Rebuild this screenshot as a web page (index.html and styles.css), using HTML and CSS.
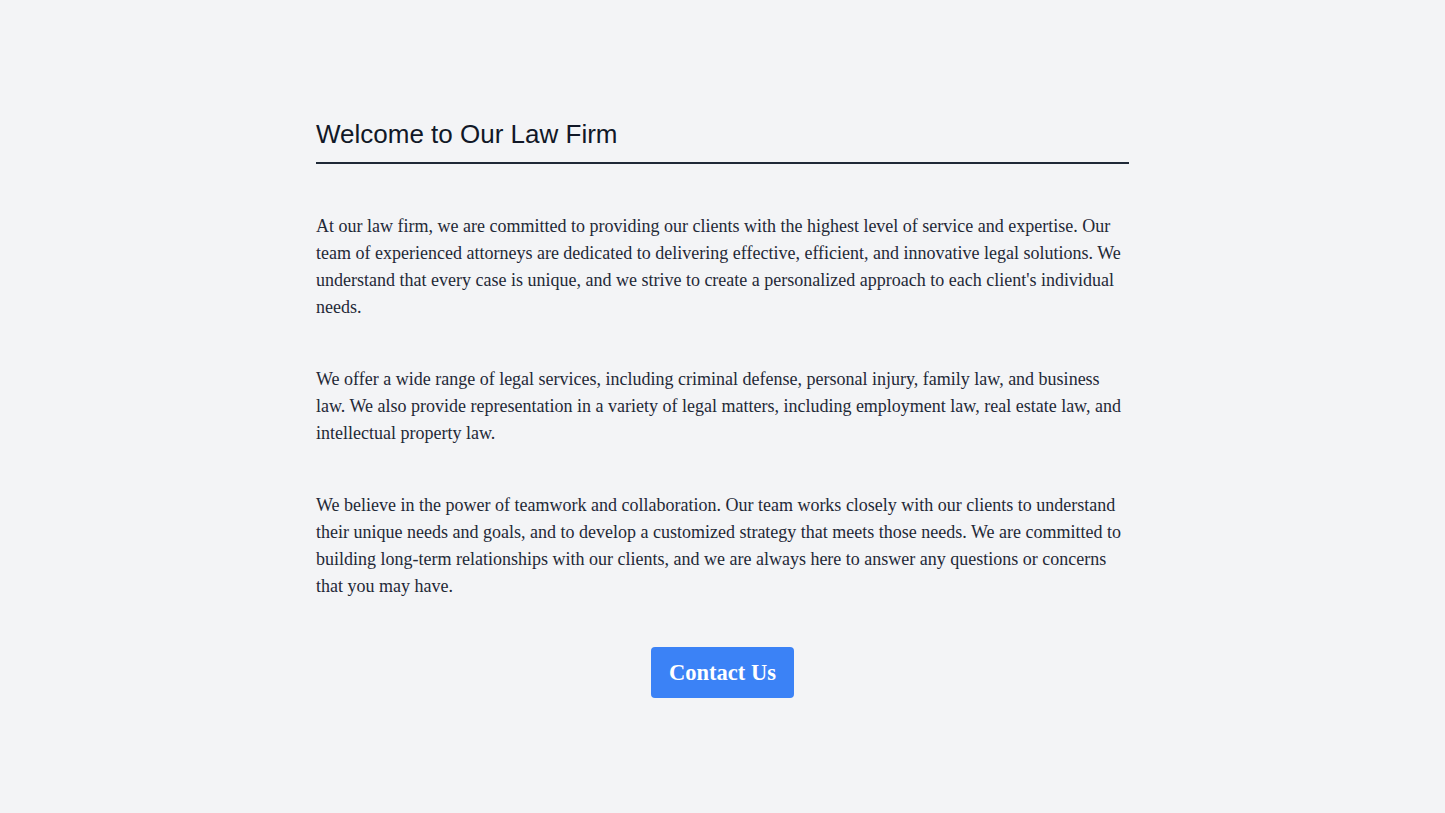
FILE: index.html
```html
<!DOCTYPE html>
<html lang="en">
<head>
<meta charset="utf-8">
<title>Law Firm</title>
<link rel="stylesheet" href="styles.css">
</head>
<body>
<main class="page">
  <header class="intro">
    <h1 class="title">Welcome to Our Law Firm</h1>
  </header>
  <section class="content">
    <p class="text">At our law firm, we are committed to providing our clients with the highest level of service and expertise. Our team of experienced attorneys are dedicated to delivering effective, efficient, and innovative legal solutions. We understand that every case is unique, and we strive to create a personalized approach to each client's individual needs.</p>
    <p class="text">We offer a wide range of legal services, including criminal defense, personal injury, family law, and business law. We also provide representation in a variety of legal matters, including employment law, real estate law, and intellectual property law.</p>
    <p class="text">We believe in the power of teamwork and collaboration. Our team works closely with our clients to understand their unique needs and goals, and to develop a customized strategy that meets those needs. We are committed to building long-term relationships with our clients, and we are always here to answer any questions or concerns that you may have.</p>
  </section>
  <div class="actions">
    <a class="button" href="#">Contact Us</a>
  </div>
</main>
</body>
</html>
```
FILE: styles.css
```css
html, body {
  margin: 0;
  padding: 0;
  background: #f3f4f6;
}
body {
  min-height: 813px;
}
.page {
  width: 813px;
  margin: 0 auto;
  padding-top: 116px;
  font-family: "Liberation Serif", "Times New Roman", serif;
}
.intro {
  border-bottom: 2px solid #1f2937;
  padding-bottom: 10px;
}
.title {
  margin: 0;
  font-family: "Liberation Sans", Arial, sans-serif;
  font-weight: 400;
  font-size: 26px;
  line-height: 36px;
  color: #111827;
}
.content {
  padding-top: 49px;
}
.text {
  margin: 0 0 45px;
  font-size: 18px;
  line-height: 27px;
  color: #1f2937;
}
.actions {
  display: flex;
  justify-content: center;
  padding-top: 2px;
}
.button {
  display: inline-block;
  background: #3b82f6;
  color: #ffffff;
  font-weight: 700;
  font-size: 22.5px;
  line-height: 27px;
  padding: 12px 18px;
  border-radius: 4px;
  text-decoration: none;
}
```
